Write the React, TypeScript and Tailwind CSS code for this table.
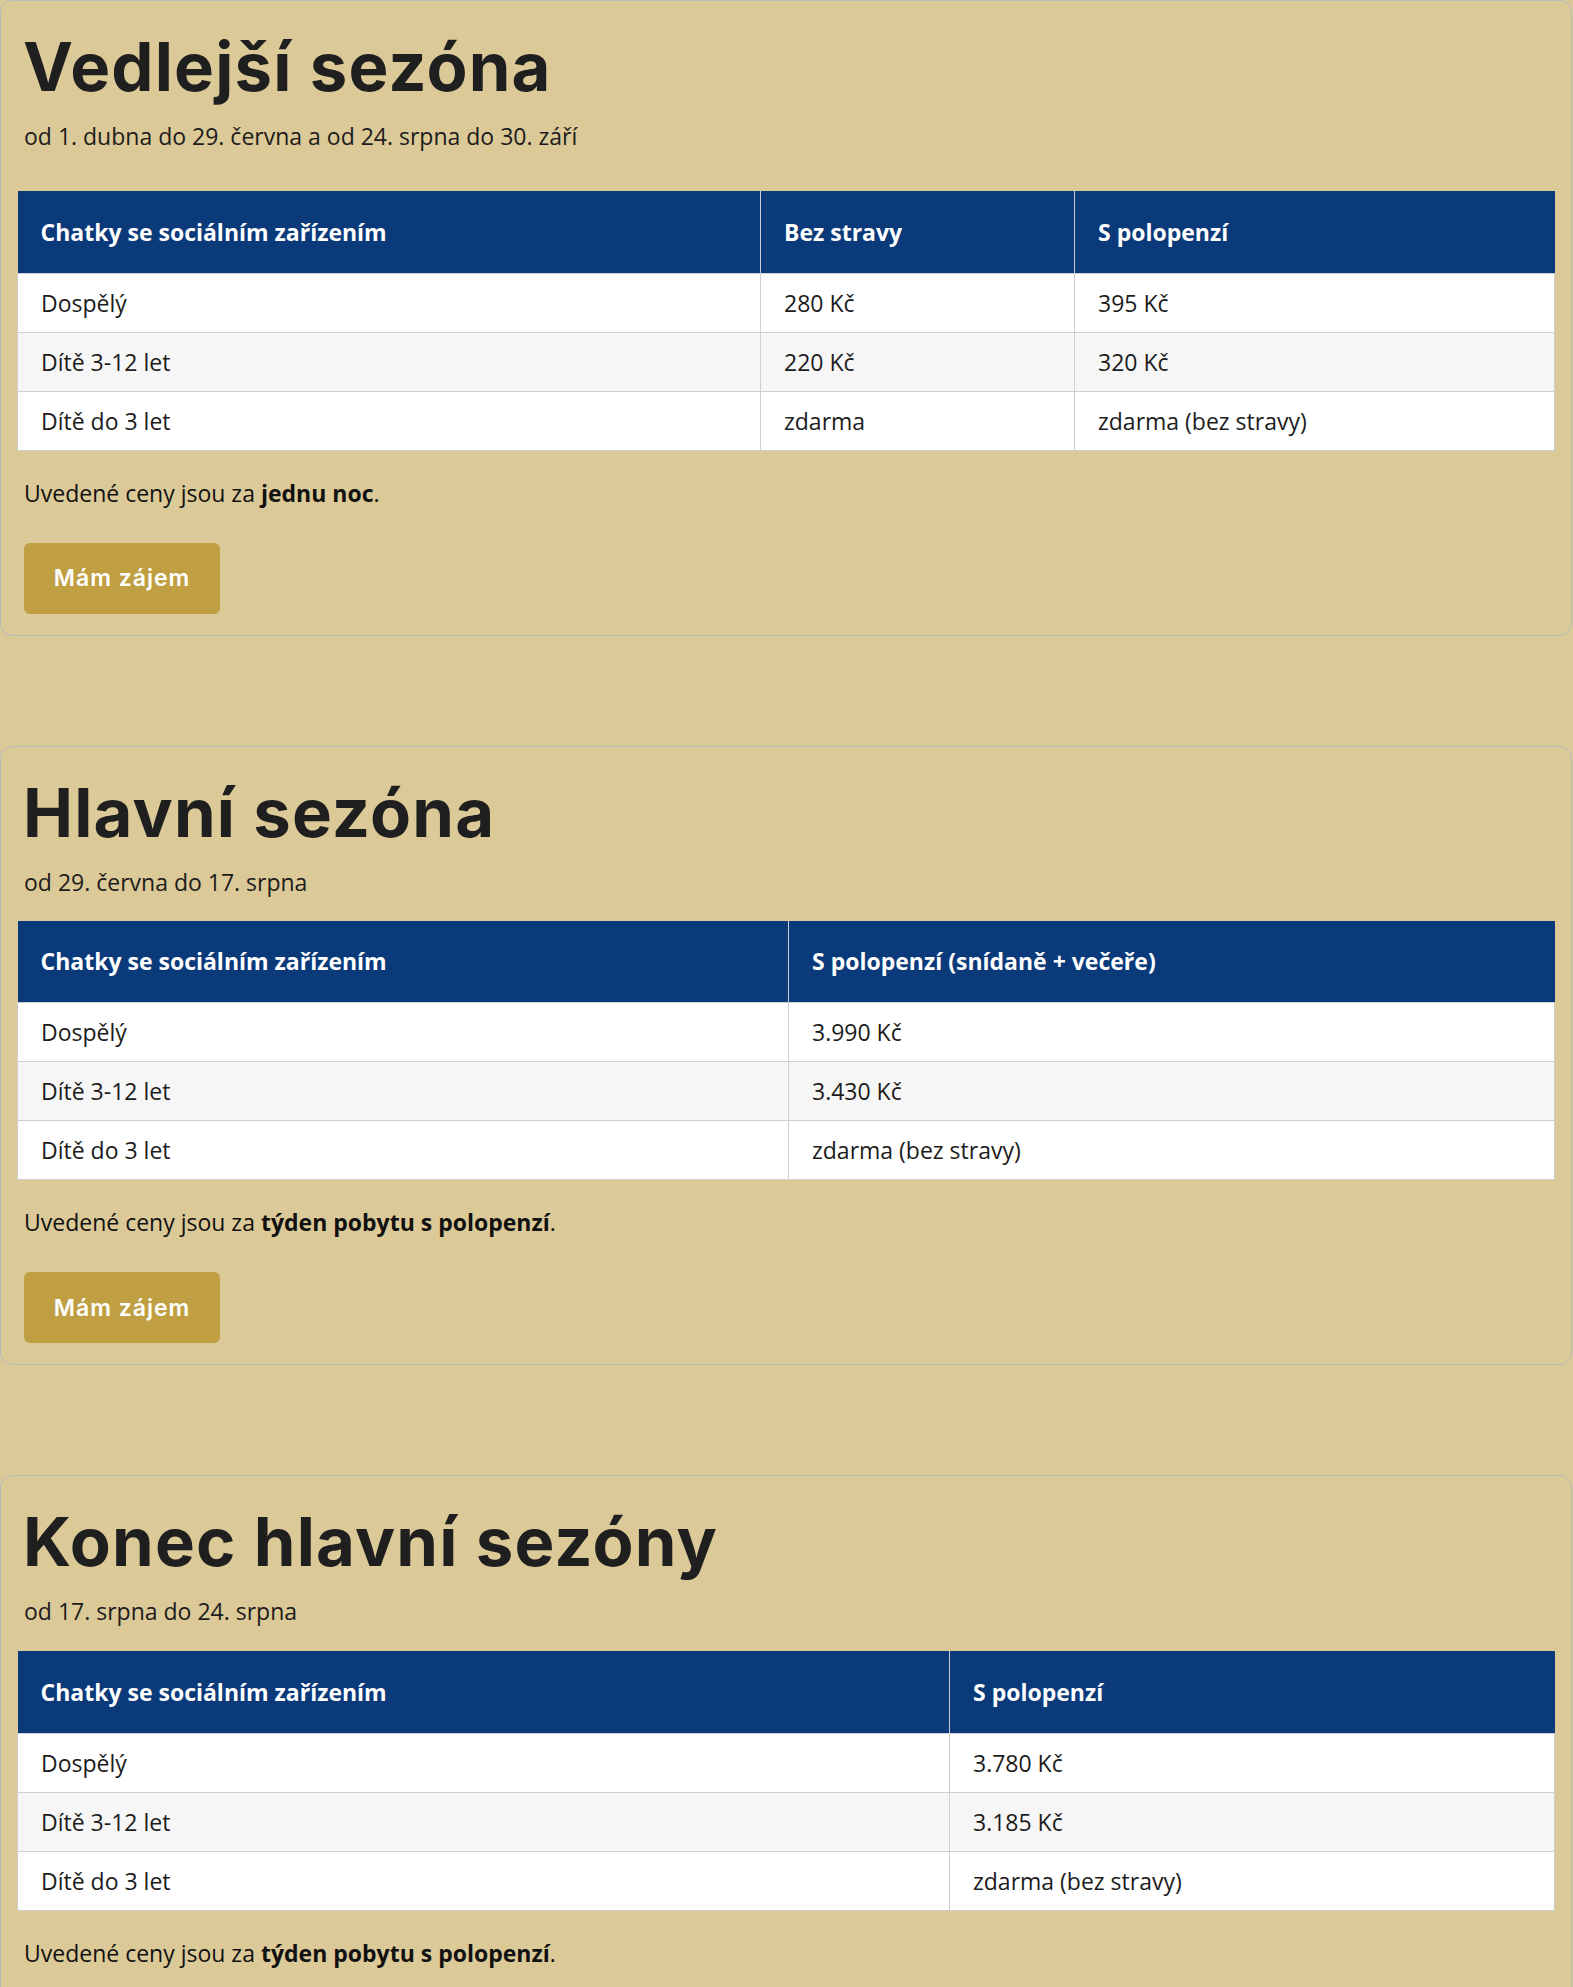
import React from "react";

type Season = {
  title: string;
  range: string;
  cols: string[];
  widths: string[];
  rows: string[][];
  note: string;
  tableGap: string;
};

const seasons: Season[] = [
  {
    title: "Vedlejší sezóna",
    range: "od 1. dubna do 29. června a od 24. srpna do 30. září",
    cols: ["Chatky se sociálním zařízením", "Bez stravy", "S polopenzí"],
    widths: ["w-[743px]", "w-[314px]", ""],
    rows: [
      ["Dospělý", "280 Kč", "395 Kč"],
      ["Dítě 3-12 let", "220 Kč", "320 Kč"],
      ["Dítě do 3 let", "zdarma", "zdarma (bez stravy)"],
    ],
    note: "jednu noc",
    tableGap: "mt-[39px]",
  },
  {
    title: "Hlavní sezóna",
    range: "od 29. června do 17. srpna",
    cols: ["Chatky se sociálním zařízením", "S polopenzí (snídaně + večeře)"],
    widths: ["w-[771px]", ""],
    rows: [
      ["Dospělý", "3.990 Kč"],
      ["Dítě 3-12 let", "3.430 Kč"],
      ["Dítě do 3 let", "zdarma (bez stravy)"],
    ],
    note: "týden pobytu s polopenzí",
    tableGap: "mt-[23px]",
  },
  {
    title: "Konec hlavní sezóny",
    range: "od 17. srpna do 24. srpna",
    cols: ["Chatky se sociálním zařízením", "S polopenzí"],
    widths: ["w-[932px]", ""],
    rows: [
      ["Dospělý", "3.780 Kč"],
      ["Dítě 3-12 let", "3.185 Kč"],
      ["Dítě do 3 let", "zdarma (bez stravy)"],
    ],
    note: "týden pobytu s polopenzí",
    tableGap: "mt-[24px]",
  },
];

const SeasonCard = ({ season }: { season: Season }) => {
  return (
    <section className="w-[1572px] border border-[#b7bbbf] rounded-[12px] px-4 pt-4 pb-[21px]">
      <h2 className="mt-4 px-[6px] font-['Inter',sans-serif] font-bold text-[67px] leading-none text-[#1f1f1f] tracking-[1.2px]">
        {season.title}
      </h2>
      <p className="mt-[20px] px-[7px] text-[23px] leading-[32px] text-[#1c1c1c]">
        {season.range}
      </p>
      <table className={`${season.tableGap} w-full border-collapse table-fixed`}>
        <colgroup>
          {season.widths.map((w, i) => (
            <col key={i} className={w} />
          ))}
        </colgroup>
        <thead>
          <tr className="h-[82px] bg-[#0a3a7a]">
            {season.cols.map((c, i) => (
              <th
                key={i}
                className="px-[23px] text-left font-bold text-white border-l border-[#c9ced6] first:border-l-0"
              >
                {c}
              </th>
            ))}
          </tr>
        </thead>
        <tbody>
          {season.rows.map((r, i) => (
            <tr key={i} className={`h-[59px] ${i === 1 ? "bg-[#f6f6f6]" : "bg-white"}`}>
              {r.map((cell, j) => (
                <td key={j} className="px-[23px] border border-[#cfcfcf] text-[#1c1c1c]">
                  {cell}
                </td>
              ))}
            </tr>
          ))}
        </tbody>
      </table>
      <p className="mt-[26px] px-[7px] text-[23px] leading-[32px] text-[#111]">
        Uvedené ceny jsou za <strong className="font-bold">{season.note}</strong>.
      </p>
      <div className="mt-[34px] px-[7px]">
        <button
          type="button"
          className="w-[196px] h-[71px] rounded-[6px] bg-[#bf9f42] text-white font-['Inter',sans-serif] font-semibold text-[23px] tracking-[1px]"
        >
          Mám zájem
        </button>
      </div>
    </section>
  );
};

export default function App() {
  return (
    <div className="min-h-screen bg-[#dcc998] font-['Open_Sans',sans-serif] text-[23px] leading-[32px]">
      <div className="flex flex-col gap-[110px]">
        {seasons.map((s) => (
          <SeasonCard key={s.title} season={s} />
        ))}
      </div>
    </div>
  );
}
